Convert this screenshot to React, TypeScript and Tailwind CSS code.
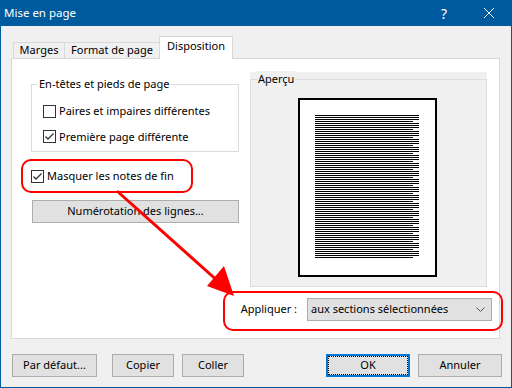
import React from 'react';

const font = { fontFamily: '"Noto Sans", "Liberation Sans", sans-serif' };

function Check({ checked }: { checked?: boolean }) {
  return (
    <span className="w-[13px] h-[13px] border border-[#333333] bg-white flex items-center justify-center shrink-0">
      {checked && (
        <svg width="11" height="11" viewBox="0 0 11 11">
          <path d="M1.5 5.5 L4 8 L9.5 2.5" fill="none" stroke="#333333" strokeWidth="1.3" />
        </svg>
      )}
    </span>
  );
}

function Btn({ label, className = '' }: { label: string; className?: string }) {
  return (
    <div className={`h-[23px] bg-[#e1e1e1] border border-[#adadad] flex items-center justify-center text-[11px] text-black ${className}`}>
      {label}
    </div>
  );
}

const lines = Array.from({ length: 72 }, (_, i) => i);

export default function App() {
  return (
    <div className="relative w-[512px] h-[388px] bg-[#f0f0f0] flex flex-col text-[11px] text-black" style={font}>
      {/* title bar */}
      <div className="h-[26px] bg-[#005a9e] text-white flex items-center pl-[4px] shrink-0">
        <span className="text-[11.5px] flex-1">Mise en page</span>
        <span className="text-[14px] w-[14px] mr-[28px]">?</span>
        <svg width="12" height="12" viewBox="0 0 12 12" className="mr-[17px]">
          <path d="M1 1 L11 11 M11 1 L1 11" stroke="white" strokeWidth="1" />
        </svg>
      </div>

      <div className="flex-1 flex flex-col border-x border-b border-[#005a9e] px-[10px] pt-[10px]">
        {/* tabs */}
        <div className="flex items-end h-[23px] ml-[2px] -mb-px relative z-10">
          <div className="w-[51px] h-[16px] mb-px border-l border-t border-[#d9d9d9] flex items-center justify-center">Marges</div>
          <div className="w-[95px] h-[16px] mb-px border-l border-t border-[#d9d9d9] flex items-center justify-center">Format de page</div>
          <div className="w-[74px] h-[23px] bg-white border-x border-t border-[#d9d9d9] flex items-center justify-center pb-[3px]">Disposition</div>
        </div>

        {/* panel */}
        <div className="w-[489px] h-[281px] border border-[#d9d9d9] bg-white flex flex-col">
          <div className="flex pl-[19px]">
            <div className="flex flex-col w-[208px]">
              <div className="relative mt-[25px] h-[68px] border border-[#dcdcdc] flex flex-col gap-[9px] pl-[11px] pt-[18px]">
                <span className="absolute -top-[9px] left-[5px] px-[2px] bg-white leading-[16px]">En-têtes et pieds de page</span>
                <div className="flex items-center gap-[3px]">
                  <Check />
                  <span>Paires et impaires différentes</span>
                </div>
                <div className="flex items-center gap-[3px]">
                  <Check checked />
                  <span>Première page différente</span>
                </div>
              </div>
              <div className="flex items-center gap-[3px] mt-[16px]">
                <Check checked />
                <span>Masquer les notes de fin</span>
              </div>
              <Btn label="Numérotation des lignes..." className="mt-[15px] ml-px w-[207px]" />
            </div>

            <div className="ml-[11px] mt-[13px] w-[237px] h-[215px] bg-[#f0f0f0] pt-[7px]">
              <div className="relative h-[208px] border border-[#dcdcdc] pt-[18px] pl-[47px]">
                <span className="absolute -top-[9px] left-[6px] px-[1px] bg-[#f0f0f0] leading-[16px]">Aperçu</span>
                <div className="w-[139px] h-[179px] bg-white border-2 border-black pt-[15px] pl-[15px] flex flex-col gap-px">
                  {lines.map((i) => (
                    <div key={i} className={`h-px shrink-0 bg-black ${i % 4 === 3 ? 'w-[98px]' : 'w-[104px]'}`} />
                  ))}
                </div>
              </div>
            </div>
          </div>

          <div className="mt-auto flex items-center justify-end pr-[7px] pb-[17px] gap-[10px]">
            <span>Appliquer :</span>
            <div className="w-[185px] h-[23px] bg-[#e1e1e1] border border-[#adadad] flex items-center pl-[3px] pr-[6px]">
              <span className="flex-1">aux sections sélectionnées</span>
              <svg width="9" height="5" viewBox="0 0 9 5">
                <path d="M0.5 0.5 L4.5 4.5 L8.5 0.5" fill="none" stroke="#555" strokeWidth="1" />
              </svg>
            </div>
          </div>
        </div>

        {/* bottom buttons */}
        <div className="mt-[15px] ml-px w-[490px] flex">
          <Btn label="Par défaut..." className="w-[85px]" />
          <Btn label="Copier" className="w-[62px] ml-[15px]" />
          <Btn label="Coller" className="w-[62px] ml-[8px]" />
          <div className="flex-1" />
          <div className="relative w-[84px] h-[23px] bg-[#e1e1e1] border-2 border-[#0078d7] flex items-center justify-center">
            <div className="absolute inset-0 border border-dotted border-black" />
            OK
          </div>
          <Btn label="Annuler" className="w-[84px] ml-[8px]" />
        </div>
      </div>

      {/* red annotations */}
      <div className="absolute left-[21px] top-[159px] w-[172px] h-[34px] border-2 border-[#f00] rounded-[10px] pointer-events-none" />
      <div className="absolute left-[223px] top-[291px] w-[280px] h-[40px] border-2 border-[#f00] rounded-[10px] pointer-events-none" />
      <svg className="absolute left-0 top-0 pointer-events-none" width="512" height="388">
        <line x1="117" y1="191" x2="220" y2="283" stroke="#f00" strokeWidth="3" />
        <polygon points="234,296 207,286 224,266" fill="#f00" />
      </svg>
    </div>
  );
}
